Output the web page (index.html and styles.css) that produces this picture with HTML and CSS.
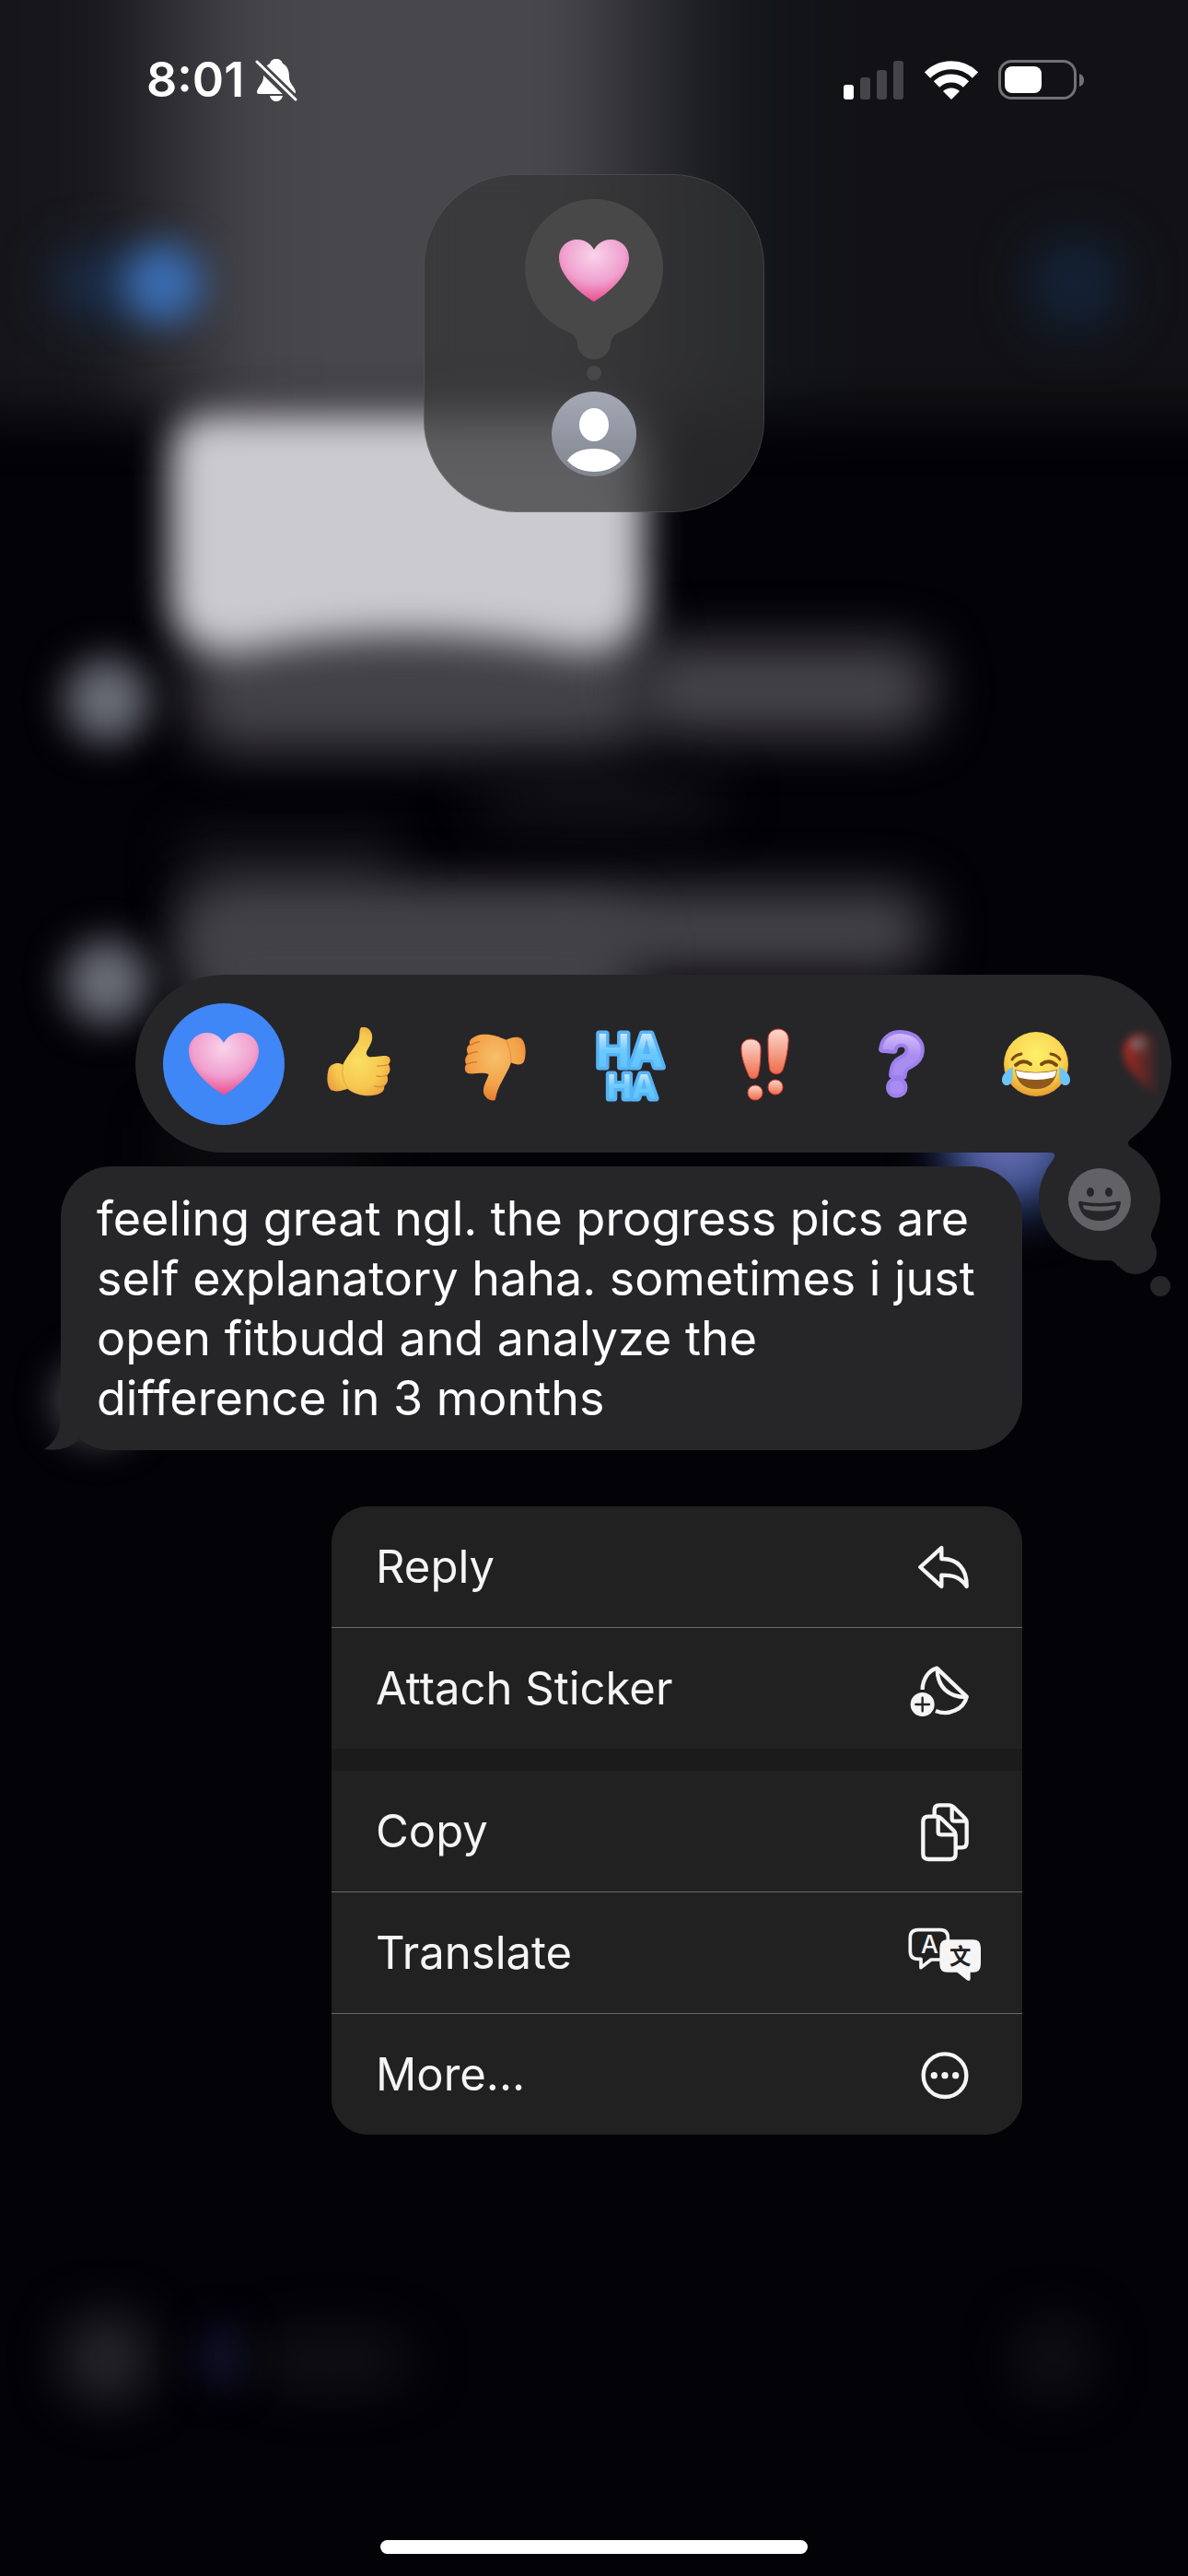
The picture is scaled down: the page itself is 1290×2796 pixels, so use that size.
FILE: index.html
```
<!DOCTYPE html>
<html lang="en">
<head>
  <meta charset="UTF-8">
  <meta name="viewport" content="width=device-width, initial-scale=1.0">
  <title>Messages</title>
  <link rel="stylesheet" href="styles.css">
</head>
<body>
  <!-- blurred conversation behind the menu -->
  <svg class="backdrop" viewBox="0 0 1290 2796" preserveAspectRatio="xMidYMid slice" aria-hidden="true">
    <defs>
      <linearGradient id="head" gradientUnits="userSpaceOnUse" x1="0" x2="1290">
        <stop offset="0" stop-color="#15151a"/>
        <stop offset=".08" stop-color="#18181c"/>
        <stop offset=".21" stop-color="#45444a"/>
        <stop offset=".28" stop-color="#48474b"/>
        <stop offset=".47" stop-color="#48474b"/>
        <stop offset=".54" stop-color="#2f2f33"/>
        <stop offset=".61" stop-color="#17191d"/>
        <stop offset=".65" stop-color="#12151a"/>
        <stop offset=".72" stop-color="#121216"/>
        <stop offset="1" stop-color="#121216"/>
      </linearGradient>
      <filter id="soft" x="-100%" y="-100%" width="300%" height="300%" color-interpolation-filters="sRGB"><feGaussianBlur stdDeviation="20"/></filter>
      <filter id="softer" x="-200%" y="-200%" width="500%" height="500%" color-interpolation-filters="sRGB"><feGaussianBlur stdDeviation="28"/></filter>
      <filter id="edge" filterUnits="userSpaceOnUse" x="-200" y="-200" width="1690" height="900" color-interpolation-filters="sRGB"><feGaussianBlur stdDeviation="28"/></filter>
    </defs>
    <rect width="1290" height="2796" fill="#030207"/>
    <rect x="-150" y="-150" width="1590" height="600" fill="url(#head)" filter="url(#edge)"/>
    <ellipse cx="110" cy="308" rx="50" ry="36" fill="#1b3050" filter="url(#softer)"/>
    <circle cx="177" cy="308" r="44" fill="#3a6cb2" filter="url(#soft)"/>
    <circle cx="1168" cy="308" r="50" fill="#14243a" filter="url(#softer)"/>
    <rect x="205" y="650" width="500" height="165" rx="50" fill="#434247" filter="url(#softer)"/>
    <rect x="690" y="698" width="325" height="100" rx="40" fill="#454449" filter="url(#softer)"/>
    <path d="M184 500 Q184 448 230 448 H660 Q700 448 700 500 V640 Q700 708 630 708 Q440 670 260 708 Q184 712 184 640Z" fill="#cbcacf" filter="url(#soft)"/>
    <circle cx="116" cy="760" r="46" fill="#6a6d77" filter="url(#soft)"/>
    <ellipse cx="650" cy="868" rx="140" ry="26" fill="#16161a" filter="url(#softer)"/>
    <rect x="200" y="910" width="230" height="80" fill="#19191d" filter="url(#softer)"/>
    <rect x="200" y="965" width="810" height="90" rx="40" fill="#454449" filter="url(#softer)"/>
    <rect x="200" y="985" width="490" height="120" rx="40" fill="#434247" filter="url(#softer)"/>
    <circle cx="116" cy="1066" r="46" fill="#6a6d77" filter="url(#soft)"/>
    <rect x="180" y="1220" width="220" height="50" fill="#0f0f13" filter="url(#softer)"/>
    <circle cx="1100" cy="1240" r="76" fill="#344a86" filter="url(#softer)"/>
    <circle cx="1095" cy="1235" r="50" fill="#5f68ac" filter="url(#soft)"/>
    <circle cx="106" cy="1520" r="46" fill="#4b4c54" filter="url(#soft)"/>
    <circle cx="116" cy="2560" r="46" fill="#2a2a2e" filter="url(#softer)"/>
    <ellipse cx="240" cy="2558" rx="24" ry="36" fill="#121430" filter="url(#soft)"/>
    <ellipse cx="360" cy="2562" rx="90" ry="30" fill="#121216" filter="url(#softer)"/>
    <circle cx="1144" cy="2560" r="40" fill="#121216" filter="url(#softer)"/>
  </svg>

  <!-- shared gradients and the heart -->
  <svg class="defs" aria-hidden="true">
    <defs>
      <radialGradient id="pink" cx=".5" cy=".25" r=".8">
        <stop offset="0" stop-color="#f9d3ea"/>
        <stop offset=".55" stop-color="#f0a0cf"/>
        <stop offset="1" stop-color="#e93f83"/>
      </radialGradient>
      <radialGradient id="yellow" cx=".5" cy=".5" r=".65">
        <stop offset="0" stop-color="#fbdf62"/>
        <stop offset=".6" stop-color="#f6c74e"/>
        <stop offset="1" stop-color="#e8963c"/>
      </radialGradient>
      <radialGradient id="orange" cx=".5" cy=".35" r=".7">
        <stop offset="0" stop-color="#f6c06a"/>
        <stop offset=".6" stop-color="#f3a148"/>
        <stop offset="1" stop-color="#e2752a"/>
      </radialGradient>
      <linearGradient id="aqua" x2="0" y2="1">
        <stop offset=".2" stop-color="#c9e6fd"/>
        <stop offset=".5" stop-color="#6ccafb"/>
        <stop offset="1" stop-color="#5cbffb"/>
      </linearGradient>
      <linearGradient id="coral" x2="0" y2="1">
        <stop offset="0" stop-color="#fbd9cf"/>
        <stop offset="1" stop-color="#ee6b4c"/>
      </linearGradient>
      <linearGradient id="violet" x2="0" y2="1">
        <stop offset=".15" stop-color="#dcc5fa"/>
        <stop offset=".4" stop-color="#a98df0"/>
        <stop offset="1" stop-color="#a88bf0"/>
      </linearGradient>
      <radialGradient id="face" cx=".5" cy=".35" r=".65">
        <stop offset="0" stop-color="#fdf06a"/>
        <stop offset=".65" stop-color="#fad552"/>
        <stop offset="1" stop-color="#e79a2d"/>
      </radialGradient>
      <linearGradient id="person" x2="0" y2="1">
        <stop offset="0" stop-color="#a5a9b6"/>
        <stop offset="1" stop-color="#81858f"/>
      </linearGradient>
      <symbol id="heart" viewBox="0 0 76 68">
        <path d="M38 67.500C30 63 0 42 0 20C0 8 9 0 20 0C28 0 34 4 38 11C42 4 48 0 56 0C67 0 76 8 76 20C76 42 46 63 38 67.500Z"/>
      </symbol>
    </defs>
  </svg>

  <div class="screen">
    <header class="status">
      <div class="status-left">
        <time class="clock">8:01</time>
        <svg width="46" height="48" viewBox="0 0 46 48" role="img" aria-label="Silent">
          <path fill="#fff" d="M23 1c-4 0-6 2-7 5C10 9 9 15 9 21c0 7-7 11-7 16 0 1 1 2 2 2h38c1 0 2-1 2-2 0-5-7-9-7-16 0-6-1-12-7-15-1-3-3-5-7-5zM16 41c1 4 4 6 7 6s6-2 7-6z"/>
          <path stroke="#46454a" stroke-width="10" d="M1 4l43 42"/>
          <path stroke="#fff" stroke-width="3" stroke-linecap="round" d="M2 4l42 41"/>
        </svg>
      </div>
      <div class="status-right">
        <svg width="66" height="42" viewBox="0 0 66 42" role="img" aria-label="Signal">
          <rect x="0" y="26" width="11" height="16" rx="3" fill="#fff"/>
          <rect x="18" y="18" width="11" height="24" rx="3" fill="#454449"/>
          <rect x="36" y="10" width="11" height="32" rx="3" fill="#454449"/>
          <rect x="54" y="0" width="11" height="42" rx="3" fill="#454449"/>
        </svg>
        <svg width="58" height="42" viewBox="0 0 58 42" role="img" aria-label="Wi-Fi">
          <g fill="none" stroke="#fff" stroke-width="9">
            <path d="M3 15.500a37 37 0 0 1 52 0"/>
            <path d="M13 25.500a23 23 0 0 1 32 0"/>
          </g>
          <path fill="#fff" d="M29 42l-9-9a13 13 0 0 1 18 0z"/>
        </svg>
        <svg width="94" height="44" viewBox="0 0 94 44" role="img" aria-label="Battery">
          <rect x="1.500" y="1.500" width="82" height="40" rx="13" fill="none" stroke="#727176" stroke-width="3"/>
          <rect x="7" y="7" width="40" height="29" rx="8" fill="#fff"/>
          <path fill="#727176" d="M88 15c3 1 5 3 5 7s-2 6-5 7z"/>
        </svg>
      </div>
    </header>

    <section class="preview" aria-label="Your reaction">
      <svg width="150" height="197" viewBox="0 0 150 197" aria-hidden="true">
        <g fill="#484848">
          <circle cx="75" cy="75" r="75"/>
          <path d="M44 142Q57 148 57 158H93Q93 148 106 142Z"/>
          <circle cx="75" cy="156" r="18"/>
          <circle cx="75" cy="189" r="8"/>
        </g>
        <use href="#heart" x="37" y="43" width="76" height="70" fill="url(#pink)"/>
      </svg>
      <svg width="92" height="92" viewBox="0 0 92 92" role="img" aria-label="Contact">
        <circle cx="46" cy="46" r="46" fill="url(#person)"/>
        <ellipse cx="46" cy="36" rx="16" ry="18" fill="#fff"/>
        <path fill="#fff" d="M17 75C22 66 33 62 46 62S70 66 75 75C68 83 58 87 46 87S24 83 17 75Z"/>
      </svg>
    </section>

    <div class="reactions">
      <div class="reaction-row">
        <button class="reaction selected" aria-label="Love">
          <svg width="76" height="68" viewBox="0 0 76 68"><use href="#heart" fill="url(#pink)"/></svg>
        </button>
        <button class="reaction" aria-label="Like">
          <svg width="80" height="80" viewBox="33 43 240 240">
            <path fill="url(#yellow)" d="M163 42C150 44 158 70 150 88C138 110 110 140 100 165C85 155 60 160 53 180C46 205 48 235 62 248C80 256 100 248 115 243C135 260 165 268 195 265C225 262 238 250 234 234C246 228 250 212 243 200C256 192 256 172 248 164C260 152 254 136 238 136C220 136 200 140 188 140C178 138 174 130 178 120C188 102 198 88 195 68C192 52 178 40 163 42Z"/>
            <g fill="none" stroke="#dd8a34" stroke-width="4" stroke-linecap="round">
              <path d="M212 169Q232 170 248 164M210 202Q230 205 244 199M202 234Q220 240 235 233"/>
              <path opacity=".4" d="M100 168Q92 205 115 240"/>
            </g>
          </svg>
        </button>
        <button class="reaction" aria-label="Dislike">
          <svg width="80" height="80" viewBox="474 43 240 240">
            <path fill="url(#orange)" d="M513 100C508 80 530 72 548 67C580 63 605 72 632 84C650 74 672 72 682 80C697 96 698 130 690 155C682 168 664 166 648 158C640 182 628 200 615 225C602 248 600 265 596 280C580 286 562 272 558 255C556 232 570 215 575 197C560 188 530 196 512 194C496 192 494 174 502 164C494 152 500 138 508 131C500 118 504 104 513 100Z"/>
            <g fill="none" stroke="#d97125" stroke-width="4" stroke-linecap="round">
              <path d="M515 101Q530 92 545 90M508 131Q522 124 538 123M503 164Q518 156 536 156"/>
              <path opacity=".4" d="M633 86Q648 118 648 156"/>
            </g>
          </svg>
        </button>
        <button class="reaction" aria-label="Laugh">
          <svg class="balloon" width="84" height="84" viewBox="0 0 84 84" fill="url(#aqua)" stroke="#56b4f8" stroke-width="7" stroke-linejoin="round">
            <text x="42" y="45" font-size="49" text-anchor="middle">HA</text>
            <text x="44" y="79" font-size="36" text-anchor="middle">HA</text>
          </svg>
        </button>
        <button class="reaction" aria-label="Emphasize">
          <svg width="80" height="80" viewBox="0 0 80 80" fill="url(#coral)" stroke="#e8432b" stroke-width="1">
            <path d="M14 23C14 16 19 13 24 13C31 13 35 17 35 23C35 35 34 45 32 52C31 57 23 57 22 52C18 43 14 33 14 23Z"/>
            <path d="M43 13C43 5 49 2 55 2C62 3 66 8 65 16C64 30 61 40 59 46C57 52 47 52 45 46C43 36 43 24 43 13Z"/>
            <circle cx="29" cy="71" r="8"/>
            <circle cx="51" cy="65" r="8"/>
          </svg>
        </button>
        <button class="reaction" aria-label="Question">
          <svg class="balloon" width="80" height="80" viewBox="0 0 80 80" fill="url(#violet)" stroke="#9c80ee" stroke-width="8" stroke-linejoin="round">
            <text x="40" y="72" font-size="88" text-anchor="middle" transform="rotate(5 40 40)">?</text>
          </svg>
        </button>
        <button class="reaction" aria-label="Tears of joy">
          <svg width="80" height="80" viewBox="0 0 80 80">
            <circle cx="40" cy="40" r="35" fill="url(#face)"/>
            <g fill="none" stroke="#7a4a12" stroke-linecap="round">
              <path stroke-width="3" d="M14 35Q17 30 24 29M66 35Q63 30 56 29"/>
              <path stroke-width="4" d="M18 41Q26 34 34 40M46 40Q54 34 62 41"/>
            </g>
            <path fill="#8f5a1c" d="M17 46Q40 52 63 46Q60 67 40 67T17 46Z"/>
            <path fill="#fff" d="M18 47Q40 52 62 47Q61 55 57 55Q40 59 23 55Q19 55 18 47Z"/>
            <path fill="#6cc4f8" d="M15 43C9 46 3 51 3 57C3 65 13 65 14 57C15 52 14 48 15 43ZM65 43C71 46 77 51 77 57C77 65 67 65 66 57C65 52 66 48 65 43Z"/>
          </svg>
        </button>
        <button class="reaction next" aria-label="Red heart">
          <svg width="76" height="68" viewBox="0 0 76 68">
            <use href="#heart" fill="#a82a22"/>
            <ellipse cx="18" cy="12" rx="10" ry="8" fill="#b07a78"/>
          </svg>
        </button>
      </div>
      <button class="picker" aria-label="More emoji">
        <svg width="160" height="195" viewBox="0 0 160 195">
          <g fill="#262628">
            <path d="M0 20L60 0H137L128 11L116 21Q110 26 116 31L124 37L82 87L24 55L32 43Q36 36 28 36H0Z"/>
            <circle cx="82" cy="87" r="66"/>
            <path d="M82 153H92Q98 153 102 160L121 145L142 136Q136 128 139 121L144 108L82 87Z"/>
            <circle cx="121" cy="145" r="23"/>
            <circle cx="148" cy="181" r="11"/>
          </g>
          <circle cx="82" cy="87" r="34" fill="#626166"/>
          <ellipse cx="72" cy="79" rx="4" ry="5" fill="#262628"/>
          <ellipse cx="92" cy="79" rx="4" ry="5" fill="#262628"/>
          <path fill="#262628" d="M59 91Q59 88 62 89Q82 93 102 89Q105 88 105 91Q102 110 82 110T59 91Z"/>
          <path fill="#626166" d="M64 93Q82 96 100 93Q100 98 96 98Q82 101 68 98Q64 98 64 93Z"/>
        </svg>
      </button>
    </div>

    <div class="message">
      <p>feeling great ngl. the progress pics are self explanatory haha. sometimes i just open fitbudd and analyze the difference in 3 months</p>
      <svg class="message-tail" width="48" height="74" viewBox="0 0 48 74" aria-hidden="true">
        <path fill="#262628" d="M18 0V40Q17 62 0 73Q24 77 39 61L48 40V0Z"/>
      </svg>
    </div>

    <nav class="menu" aria-label="Message actions">
      <div class="menu-group">
        <button class="menu-item">
          Reply
          <svg class="icon" viewBox="135 63 240 240">
            <path d="M178 183L247 120V156C300 154 330 190 329 246C305 212 280 209 247 209V246Z"/>
          </svg>
        </button>
        <button class="menu-item">
          Attach Sticker
          <svg class="icon" viewBox="135 456 240 240">
            <path stroke-linecap="butt" d="M185 579C185 545 205 516 232 509L329 602C320 642 270 666 228 648"/>
            <path d="M233 511C233 570 270 604 328 603"/>
            <circle class="solid" cx="185" cy="627" r="39"/>
            <path class="cut" d="M185 605V649M163 627H207"/>
          </svg>
        </button>
      </div>
      <div class="menu-group">
        <button class="menu-item">
          Copy
          <svg class="icon" viewBox="135 51 240 240">
            <path stroke-linecap="butt" d="M224 118V102Q224 85 241 85H272Q280 85 286 91L322 126Q329 133 329 141V206Q329 223 312 223H297M281 86V128Q281 137 290 137H326"/>
            <path d="M204 122H232Q240 122 246 128L287 168Q293 174 293 182V244Q293 261 276 261H204Q187 261 187 244V139Q187 122 204 122ZM236 124V172Q236 181 245 181H291"/>
          </svg>
        </button>
        <button class="menu-item">
          Translate
          <svg class="icon" viewBox="135 447 240 240">
            <path class="thin" d="M268 526V518Q268 491 243 491H171Q145 491 145 518V560Q145 586 171 586H180V614L213 588H240"/>
            <text class="glyph" x="208" y="568" font-size="80" text-anchor="middle">A</text>
            <path class="solid" d="M266 523H350Q375 523 375 550V602Q375 629 350 629H341V652Q339 660 330 655L298 629H266Q241 629 241 602V550Q241 523 266 523Z"/>
            <text class="glyph-cut" x="308" y="602" font-size="70" text-anchor="middle">文</text>
          </svg>
        </button>
        <button class="menu-item">
          More...
          <svg class="icon" viewBox="135 843 240 240">
            <circle cx="258" cy="965" r="70"/>
            <g class="solid"><circle cx="223" cy="965" r="11"/><circle cx="258" cy="965" r="11"/><circle cx="293" cy="965" r="11"/></g>
          </svg>
        </button>
      </div>
    </nav>

    <div class="home-bar"></div>
  </div>
</body>
</html>
```
FILE: styles.css
```
* {
  box-sizing: border-box;
}
body {
  margin: 0;
  background-color: #030207;
  color: #fff;
  font-family: Inter, "Liberation Sans", "Noto Sans CJK SC", sans-serif;
}
button {
  border: 0;
  padding: 0;
  background: none;
  color: inherit;
  font: inherit;
  cursor: pointer;
}
svg {
  display: block;
  flex-shrink: 0;
}
.defs {
  position: absolute;
  width: 0;
  height: 0;
}
.backdrop {
  position: absolute;
  top: 0;
  left: 0;
  width: 100%;
  height: 100%;
  min-height: 100vh;
}
.screen {
  position: relative;
  display: flex;
  flex-direction: column;
  min-height: 100vh;
  padding-bottom: 24px;
}

/* status bar */
.status {
  display: flex;
  justify-content: space-between;
  align-items: center;
  padding: 61px 112px 0 159px;
  height: 113px;
}
.status-left {
  display: flex;
  align-items: center;
  gap: 12px;
}
.clock {
  font-size: 52px;
  font-weight: 600;
  line-height: 52px;
}
.status-right {
  display: flex;
  align-items: center;
  gap: 22px;
}

/* reaction preview */
.preview {
  display: flex;
  flex-direction: column;
  align-items: center;
  align-self: center;
  gap: 12px;
  margin-top: 76px;
  padding: 26px 109px 38px;
  border: 1px solid rgba(255, 255, 255, 0.1);
  border-radius: 100px;
  background-color: rgba(53, 53, 54, 0.72);
  backdrop-filter: blur(16px);
}

/* reaction bar */
.reactions {
  position: relative;
  margin: 502px 18px 0 147px;
  border-radius: 97px;
  background-color: #262628;
}
.reaction-row {
  display: flex;
  gap: 15px;
  padding: 31px 0 30px 30px;
  overflow: hidden;
  border-radius: 97px;
  mask-image: linear-gradient(to right, #000 calc(100% - 52px), transparent calc(100% - 12px));
}
.reaction {
  display: flex;
  flex-shrink: 0;
  align-items: center;
  justify-content: center;
  width: 132px;
  height: 132px;
  border-radius: 50%;
}
.reaction.selected {
  background-color: #3f87f7;
}
.reaction.next {
  width: 104px;
  filter: blur(4px);
}
.balloon {
  overflow: visible;
  font-weight: 700;
  paint-order: stroke;
}
.picker {
  position: absolute;
  top: 157px;
  right: 0;
}

/* message bubble */
.message {
  position: relative;
  margin: 15px 180px 0 66px;
  padding: 24px 39px;
  border-radius: 55px;
  background-color: #262628;
}
.message p {
  margin: 0;
  font-size: 52px;
  line-height: 65px;
}
.message-tail {
  position: absolute;
  left: -18px;
  bottom: 0;
}

/* context menu */
.menu {
  display: flex;
  flex-direction: column;
  gap: 24px;
  margin: 61px 180px 0 360px;
  border-radius: 40px;
  background-color: #1b1b1c;
  overflow: hidden;
}
.menu-item {
  display: flex;
  justify-content: space-between;
  align-items: center;
  width: 100%;
  height: 131px;
  padding: 0 45px 0 48px;
  background-color: #212122;
  color: #f5f5f5;
  font-size: 49px;
  text-align: left;
}
.menu-item + .menu-item {
  height: 132px;
  border-top: 1px solid #6a6a6a;
}
.icon {
  width: 80px;
  height: 80px;
  fill: none;
  stroke: #f5f5f5;
  stroke-width: 13;
  stroke-linecap: round;
  stroke-linejoin: round;
}
.icon .solid {
  fill: #f5f5f5;
  stroke: none;
}
.icon .thin {
  stroke-width: 11;
}
.icon .cut {
  stroke: #212122;
  stroke-width: 7;
}
.icon .glyph {
  fill: #f5f5f5;
  stroke: none;
  font-weight: 500;
}
.icon .glyph-cut {
  fill: #212122;
  stroke: none;
  font-family: "Noto Sans CJK SC", sans-serif;
  font-weight: 700;
}

.home-bar {
  align-self: center;
  width: 36%;
  height: 15px;
  margin-top: auto;
  border-radius: 8px;
  background-color: #fff;
}
```
